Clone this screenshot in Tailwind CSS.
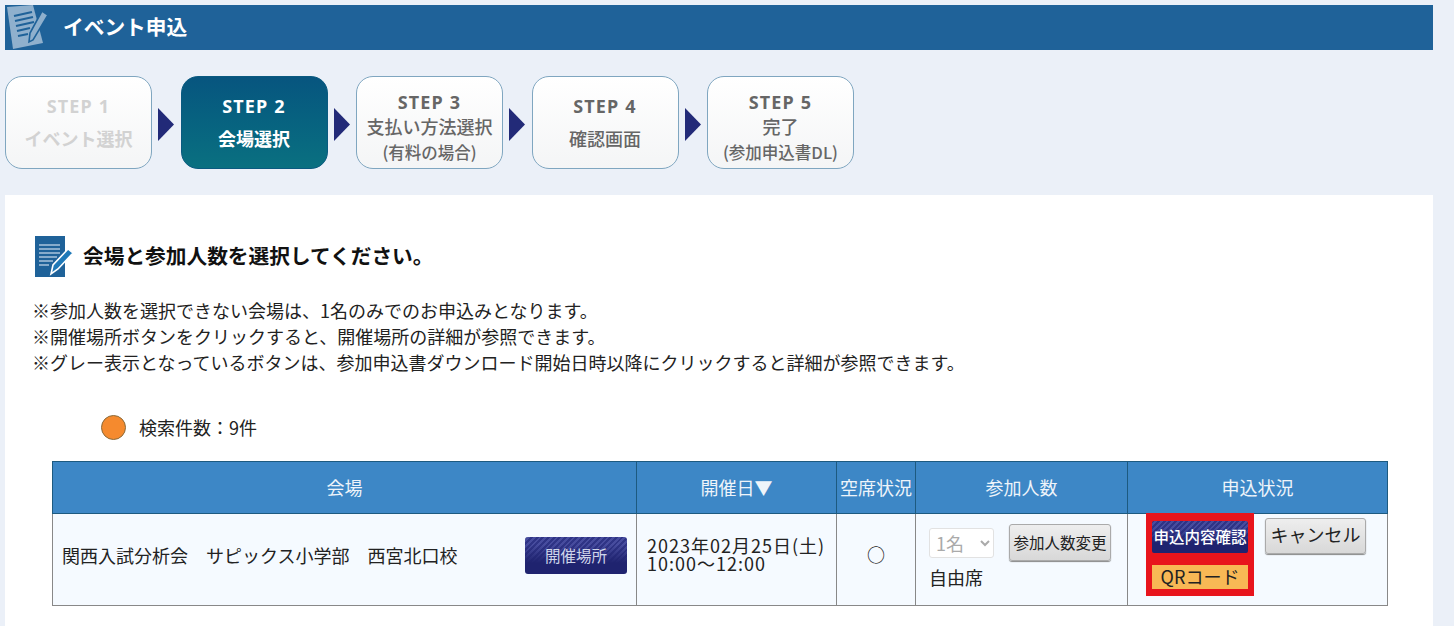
<!DOCTYPE html>
<html lang="ja">
<head>
    <meta charset="UTF-8">
    <meta name="viewport" content="width=device-width, initial-scale=1.0">
    <title>イベント申込</title>
    <script src="https://cdn.jsdelivr.net/npm/@tailwindcss/browser@4"></script>
</head>
<body class="h-screen overflow-hidden bg-[#ebf0f8] font-['Noto_Sans_CJK_JP','Noto_Sans',sans-serif] text-[#222]">

    <div class="pt-[5px] pl-[5px] pr-[21px]">

        <!-- Header -->
        <div class="flex items-center h-[45px] bg-[#1f6299]">
            <svg class="w-[44px] h-[45px] ml-[1px] shrink-0" viewBox="0 0 44 45">
                <path d="M1 2 L27 0 L37 38 L7 44 Z" fill="#8fb0cd"/>
                <path d="M8 11 L26 7 M9 16 L27 12 M10 21 L28 17 M11 26 L24 23 M12 31 L22 29" stroke="#1f6299" stroke-width="2.2" fill="none"/>
                <path d="M36 6 L42 10 L27 35 L23 37 L24 28 Z" fill="#8fb0cd" stroke="#1f6299" stroke-width="1.6"/>
            </svg>
            <h1 class="ml-[13px] pb-[3px] text-[20.7px] font-bold text-white leading-none">イベント申込</h1>
        </div>

        <!-- Steps -->
        <div class="flex items-center mt-[26px] h-[93px]">
            <div class="flex flex-col items-center justify-center gap-[8px] pb-[2px] w-[147px] h-full rounded-[17px] border-[1.5px] border-[#7fa6c0] bg-gradient-to-b from-white to-[#f4f5f6] font-bold text-[#d2d2d2]">
                <p class="text-[18px] leading-[24px] tracking-[1.2px] font-['Noto_Sans',sans-serif]">STEP 1</p>
                <p class="text-[18px] leading-[24px]">イベント選択</p>
            </div>
            <svg class="w-[16px] h-[33px] mt-[3px] mx-[6.25px] shrink-0" viewBox="0 0 16 33"><path d="M0 0 L16 16.5 L0 33 Z" fill="#222a78"/></svg>
            <div class="flex flex-col items-center justify-center gap-[8px] pb-[2px] w-[147px] h-full rounded-[17px] border-[1.5px] border-[#0a5a80] bg-gradient-to-b from-[#07557f] to-[#0a7080] font-bold text-white">
                <p class="text-[18px] leading-[24px] tracking-[1.2px] font-['Noto_Sans',sans-serif]">STEP 2</p>
                <p class="text-[18px] leading-[24px]">会場選択</p>
            </div>
            <svg class="w-[16px] h-[33px] mt-[3px] mx-[6.25px] shrink-0" viewBox="0 0 16 33"><path d="M0 0 L16 16.5 L0 33 Z" fill="#222a78"/></svg>
            <div class="flex flex-col items-center justify-center pt-[10px] w-[147px] h-full rounded-[17px] border-[1.5px] border-[#7fa6c0] bg-gradient-to-b from-white to-[#f4f5f6] font-bold text-[#666]">
                <p class="text-[18px] leading-[24px] tracking-[1.2px] font-['Noto_Sans',sans-serif]">STEP 3</p>
                <p class="text-[18px] leading-[24px] font-medium">支払い方法選択</p>
                <p class="text-[16.5px] leading-[28px] font-medium">(有料の場合)</p>
            </div>
            <svg class="w-[16px] h-[33px] mt-[3px] mx-[6.25px] shrink-0" viewBox="0 0 16 33"><path d="M0 0 L16 16.5 L0 33 Z" fill="#222a78"/></svg>
            <div class="flex flex-col items-center justify-center gap-[8px] pb-[2px] w-[147px] h-full rounded-[17px] border-[1.5px] border-[#7fa6c0] bg-gradient-to-b from-white to-[#f4f5f6] font-bold text-[#666]">
                <p class="text-[18px] leading-[24px] tracking-[1.2px] font-['Noto_Sans',sans-serif]">STEP 4</p>
                <p class="text-[18px] leading-[24px] font-medium">確認画面</p>
            </div>
            <svg class="w-[16px] h-[33px] mt-[3px] mx-[6.25px] shrink-0" viewBox="0 0 16 33"><path d="M0 0 L16 16.5 L0 33 Z" fill="#222a78"/></svg>
            <div class="flex flex-col items-center justify-center pt-[10px] w-[147px] h-full rounded-[17px] border-[1.5px] border-[#7fa6c0] bg-gradient-to-b from-white to-[#f4f5f6] font-bold text-[#666]">
                <p class="text-[18px] leading-[24px] tracking-[1.2px] font-['Noto_Sans',sans-serif]">STEP 5</p>
                <p class="text-[18px] leading-[24px] font-medium">完了</p>
                <p class="text-[16.5px] leading-[28px] font-medium">(参加申込書DL)</p>
            </div>
        </div>

        <!-- Main panel -->
        <div class="mt-[26px] h-[440px] bg-white pt-[41px] pl-[27px] pr-[46px]">

            <div class="flex items-center">
                <svg class="w-[42px] h-[41px] shrink-0" viewBox="0 0 42 41">
                    <rect x="3" y="0" width="30" height="41" fill="#1f6299"/>
                    <path d="M7 9 H28 M7 13 H28 M7 17 H28 M7 21 H25 M7 25 H21 M7 29 H17" stroke="#a9c4dc" stroke-width="1.6" fill="none"/>
                    <path d="M36 13 L41 17 L26 33 L19 38 L21 29 Z" fill="#1f79b8" stroke="#fff" stroke-width="1.6"/>
                </svg>
                <h2 class="ml-[9px] pb-[2px] text-[20.7px] font-bold text-[#111] leading-none">会場と参加人数を選択してください。</h2>
            </div>

            <div class="mt-[20px] text-[18px] leading-[26px] text-[#222]">
                <p>※参加人数を選択できない会場は、1名のみでのお申込みとなります。</p>
                <p>※開催場所ボタンをクリックすると、開催場所の詳細が参照できます。</p>
                <p>※グレー表示となっているボタンは、参加申込書ダウンロード開始日時以降にクリックすると詳細が参照できます。</p>
            </div>

            <div class="flex items-center mt-[39px] ml-[69px] h-[26px]">
                <span class="block w-[25px] h-[25px] rounded-full bg-[#f58a2e] border border-[#8a6a3a]"></span>
                <span class="ml-[13px] text-[18px]">検索件数：9件</span>
            </div>

            <!-- Result table -->
            <table class="table-fixed mt-[21px] ml-[20px] w-[1335px] border-collapse text-[18px]">
                <colgroup>
                    <col class="w-[584px]">
                    <col class="w-[200px]">
                    <col class="w-[79px]">
                    <col class="w-[212px]">
                    <col class="w-[260px]">
                </colgroup>
                <thead>
                    <tr class="h-[52px] bg-[#3d87c6] text-[#eef4fa]">
                        <th class="border border-[#1d5a80] font-normal">会場</th>
                        <th class="border border-[#1d5a80] font-normal">開催日▼</th>
                        <th class="border border-[#1d5a80] font-normal">空席状況</th>
                        <th class="border border-[#1d5a80] font-normal">参加人数</th>
                        <th class="border border-[#1d5a80] font-normal">申込状況</th>
                    </tr>
                </thead>
                <tbody>
                    <tr class="h-[92px] bg-[#f5faff]">
                        <td class="border border-[#888] pl-[9px] pr-[9px] pb-[8px]">
                            <div class="flex items-center justify-between">
                                <span>関西入試分析会　サピックス小学部　西宮北口校</span>
                                <button class="w-[102px] h-[37px] rounded-[3px] bg-[linear-gradient(180deg,#2a2f7e00_20%,#1f236f_70%),repeating-linear-gradient(135deg,#2f3486_0,#2f3486_2px,#474c9e_2px,#474c9e_4px)] text-[15.5px] text-[#cfd5ea]">開催場所</button>
                            </div>
                        </td>
                        <td class="border border-[#888] pl-[10px] pb-[12px] leading-[18px] tracking-[1px]">2023年02月25日(土)<br>10:00～12:00</td>
                        <td class="border border-[#888] pb-[10px] text-center">○</td>
                        <td class="border border-[#888] pl-[13px] pb-[6px]">
                            <div class="flex items-center gap-[15px]">
                                <select disabled class="w-[65px] h-[30px] rounded-[3px] border border-[#e2e2e2] bg-white pl-[2px] text-[#aaa]">
                                    <option>1名</option>
                                </select>
                                <button class="w-[102px] h-[37px] rounded-[3px] border border-[#aaa] bg-gradient-to-b from-[#eeeeee] to-[#d8d8d8] text-[15.5px] text-[#222] shadow-[0_1px_1px_#888]">参加人数変更</button>
                            </div>
                            <p class="mt-[4px] leading-[24px]">自由席</p>
                        </td>
                        <td class="border border-[#888] align-top">
                            <div class="flex items-start -mt-[1px]">
                                <div class="flex flex-col ml-[18px] w-[108px] h-[83px] bg-[#e8141c] px-[6px] pt-[8px]">
                                    <button class="h-[32px] rounded-[2px] bg-[linear-gradient(180deg,#2a2f7e00_20%,#1f236f_70%),repeating-linear-gradient(135deg,#2f3486_0,#2f3486_2px,#474c9e_2px,#474c9e_4px)] text-[15.5px] font-medium text-white whitespace-nowrap">申込内容確認</button>
                                    <button class="mt-[12px] h-[24px] bg-[#f8b855] pb-[3px] text-center text-[18px] leading-none text-[#222] whitespace-nowrap">QRコード</button>
                                </div>
                                <button class="mt-[5px] ml-[11px] w-[101px] h-[36px] pb-[3px] rounded-[3px] border border-[#aaa] bg-gradient-to-b from-[#eeeeee] to-[#d8d8d8] text-[18px] text-[#222] shadow-[0_1px_1px_#888]">キャンセル</button>
                            </div>
                        </td>
                    </tr>
                </tbody>
            </table>
        </div>
    </div>

</body>
</html>
